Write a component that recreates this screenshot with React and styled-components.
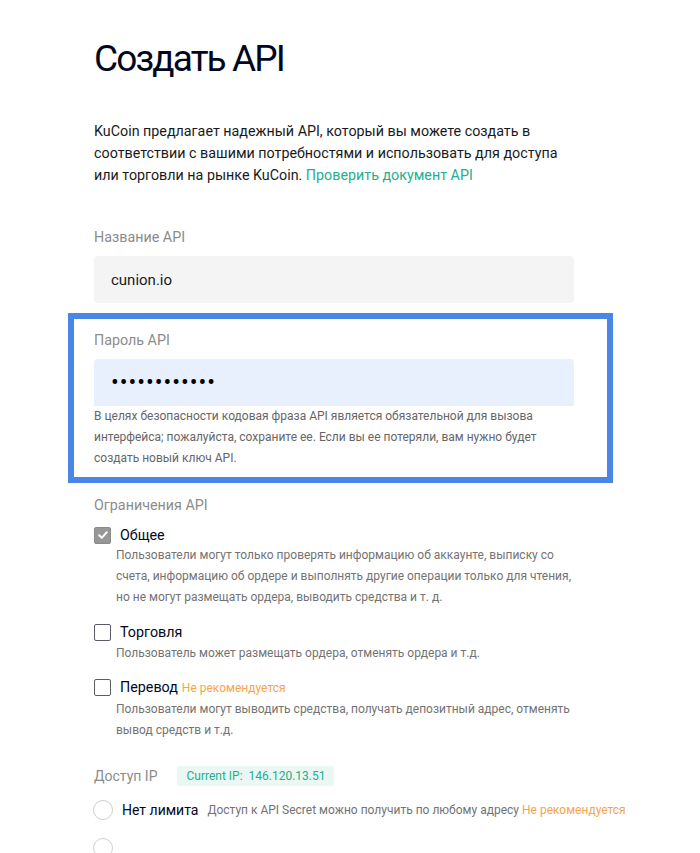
import React from "react";
import styled, { createGlobalStyle } from "styled-components";

const Global = createGlobalStyle`
  html, body { margin: 0; padding: 0; background: #fff; }
  body { font-family: Roboto, "Noto Sans", sans-serif; color: #1a1a1a; }
  * { box-sizing: border-box; }
`;

const Page = styled.div`
  padding: 36px 0 0 94px;
  width: 700px;
  height: 853px;
  overflow: hidden;
`;

const Form = styled.div`
  width: 480px;
  display: flex;
  flex-direction: column;
`;

const Title = styled.h1`
  margin: 0;
  font-size: 37px;
  font-weight: 400;
  line-height: 46px;
  letter-spacing: -1.9px;
  color: #01081e;
`;

const Intro = styled.p`
  margin: 38px 0 0;
  font-size: 14.3px;
  line-height: 22px;
  color: #1a1a1a;
`;

const Link = styled.a`
  color: #24ae8f;
  text-decoration: none;
`;

const Label = styled.div`
  font-size: 14.3px;
  line-height: 20px;
  color: #8c8c8c;
  margin-top: ${(p) => p.$top || 0}px;
`;

const Input = styled.div`
  margin-top: 9px;
  height: 47px;
  border-radius: ${(p) => (p.$filled ? "4px 4px 0 0" : "4px")};
  background: ${(p) => (p.$filled ? "#e8f0fe" : "#f4f4f4")};
  padding: 0 17px;
  display: flex;
  align-items: center;
  font-size: 15px;
  color: #1a1a1a;
`;

const Dots = styled.span`
  font-size: 23px;
  letter-spacing: 1px;
  color: #000;
  line-height: 1;
`;

const Highlight = styled.div`
  margin: 10px -39px 0 -26px;
  border: 6px solid #4a86e8;
  padding: 11px 33px 8px 20px;
`;

const Help = styled.p`
  margin: 0;
  font-size: 12px;
  line-height: 21px;
  color: #666;
`;

const Option = styled.div`
  margin-top: ${(p) => p.$top || 0}px;
  display: flex;
  flex-direction: column;
`;

const OptionHead = styled.div`
  display: flex;
  align-items: center;
  gap: 9px;
  font-size: 14.3px;
  color: #01081e;
  line-height: 20px;
`;

const Box = styled.span`
  width: 17px;
  height: 17px;
  border-radius: 2px;
  flex: none;
  display: flex;
  align-items: center;
  justify-content: center;
  background: ${(p) => (p.$checked ? "#979797" : "#fff")};
  border: 1px solid ${(p) => (p.$checked ? "#8a8a8a" : "#5c5c66")};
`;

const Warn = styled.span`
  color: #f7a34b;
  font-size: 12px;
  margin-left: 4px;
`;

const OptionDesc = styled.p`
  margin: ${(p) => p.$top ?? 1}px 0 0 22px;
  font-size: 12px;
  line-height: 21px;
  color: #737373;
`;

const IpRow = styled.div`
  margin-top: 25px;
  display: flex;
  align-items: center;
  gap: 20px;
`;

const IpLabel = styled.span`
  font-size: 14px;
  line-height: 20px;
  color: #8c8c8c;
`;

const Badge = styled.span`
  background: #eaf7f3;
  color: #24ae8f;
  font-size: 12px;
  line-height: 20px;
  padding: 0 9px;
  border-radius: 2px;
  white-space: pre;
`;

const RadioRow = styled.div`
  margin-top: ${(p) => p.$top || 0}px;
  display: flex;
  align-items: center;
  white-space: nowrap;
`;

const Radio = styled.span`
  width: 20px;
  height: 20px;
  border-radius: 50%;
  border: 1px solid #cfcfcf;
  flex: none;
  margin-left: -1px;
  margin-right: 9px;
`;

const RadioTitle = styled.span`
  font-size: 14px;
  color: #01081e;
  margin-right: 9px;
`;

const RadioDesc = styled.span`
  font-size: 12px;
  color: #737373;
`;

const RadioWarn = styled.span`
  font-size: 12px;
  color: #f7a34b;
  margin-left: 3px;
`;

const Check = () => (
  <svg width="12" height="12" viewBox="0 0 12 12">
    <path d="M2.2 6.3 L4.8 8.8 L9.8 3.2" fill="none" stroke="#fff" strokeWidth="2" strokeLinecap="round" strokeLinejoin="round" />
  </svg>
);

export default function App() {
  return (
    <>
      <Global />
      <Page>
        <Form>
          <Title>Создать API</Title>
          <Intro>
            KuCoin предлагает надежный API, который вы можете создать в соответствии с вашими
            потребностями и использовать для доступа или торговли на рынке KuCoin.{" "}
            <Link href="#">Проверить документ API</Link>
          </Intro>

          <Label $top={41}>Название API</Label>
          <Input>cunion.io</Input>

          <Highlight>
            <Label>Пароль API</Label>
            <Input $filled>
              <Dots>••••••••••••</Dots>
            </Input>
            <Help>
              В целях безопасности кодовая фраза API является обязательной для вызова интерфейса;
              пожалуйста, сохраните ее. Если вы ее потеряли, вам нужно будет создать новый ключ API.
            </Help>
          </Highlight>

          <Label $top={12}>Ограничения API</Label>

          <Option $top={10}>
            <OptionHead>
              <Box $checked><Check /></Box>
              <span>Общее</span>
            </OptionHead>
            <OptionDesc $top={0}>
              Пользователи могут только проверять информацию об аккаунте, выписку со счета,
              информацию об ордере и выполнять другие операции только для чтения, но не могут
              размещать ордера, выводить средства и т. д.
            </OptionDesc>
          </Option>

          <Option $top={14}>
            <OptionHead>
              <Box />
              <span>Торговля</span>
            </OptionHead>
            <OptionDesc>Пользователь может размещать ордера, отменять ордера и т.д.</OptionDesc>
          </Option>

          <Option $top={13}>
            <OptionHead>
              <Box />
              <span>
                Перевод<Warn>Не рекомендуется</Warn>
              </span>
            </OptionHead>
            <OptionDesc>
              Пользователи могут выводить средства, получать депозитный адрес, отменять вывод
              средств и т.д.
            </OptionDesc>
          </Option>

          <IpRow>
            <IpLabel>Доступ IP</IpLabel>
            <Badge>Current IP:  146.120.13.51</Badge>
          </IpRow>

          <RadioRow $top={14}>
            <Radio />
            <RadioTitle>Нет лимита</RadioTitle>
            <RadioDesc>Доступ к API Secret можно получить по любому адресу</RadioDesc>
            <RadioWarn>Не рекомендуется</RadioWarn>
          </RadioRow>
          <RadioRow $top={18}>
            <Radio />
          </RadioRow>
        </Form>
      </Page>
    </>
  );
}
